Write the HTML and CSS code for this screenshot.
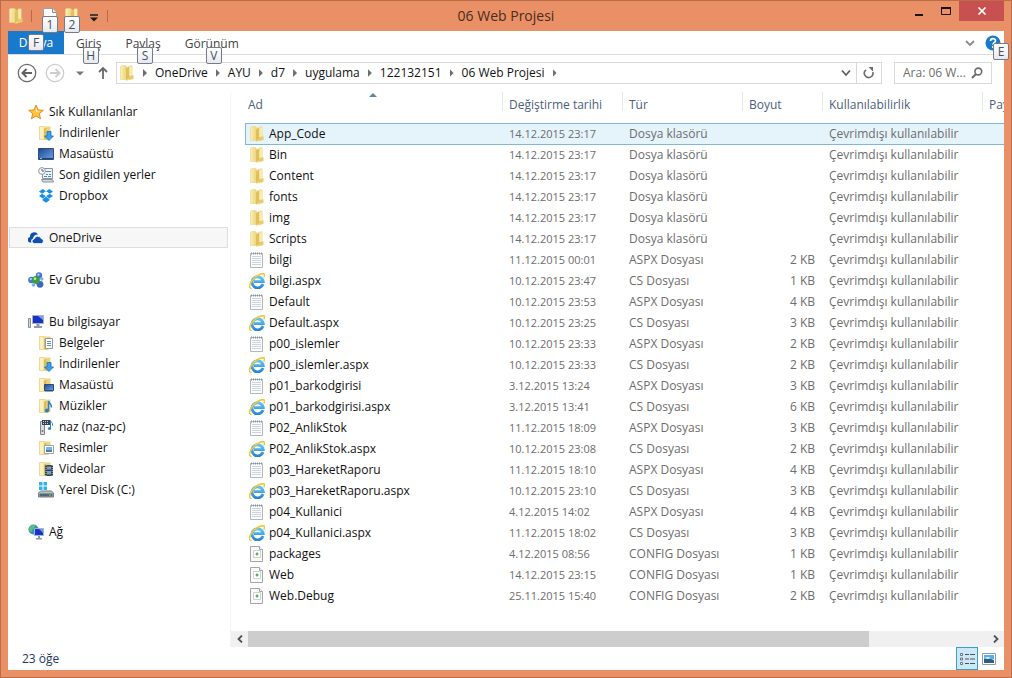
FILE: index.html
```html
<!DOCTYPE html>
<html lang="tr">
<head>
<meta charset="utf-8">
<title>06 Web Projesi</title>
<link rel="stylesheet" href="styles.css">
</head>
<body>
<svg class="sprite" aria-hidden="true">
  <defs>
    <linearGradient id="gold" x1="0" x2="1"><stop offset="0" stop-color="#fbf0b8"/><stop offset="1" stop-color="#eed37a"/></linearGradient>
    <linearGradient id="ieBlue" x1="0" y1="0" x2="0" y2="1"><stop offset="0" stop-color="#62c6f2"/><stop offset="1" stop-color="#2a86d4"/></linearGradient>
    <linearGradient id="screen" x1="0" y1="0" x2="1" y2="1"><stop offset="0" stop-color="#1c4690"/><stop offset="1" stop-color="#6fa3e4"/></linearGradient>
  </defs>
  <symbol id="folder" viewBox="0 0 16 16">
    <path d="M1.500 1.500l1-1h4l1 1v13h-6z" fill="url(#gold)" stroke="#ead488" stroke-width=".6"/>
    <path d="M7 3l4-2.500h2.500v12.500L9 15.500H7z" fill="#f0dc8c"/>
    <path d="M7 3.500l3-2v11.500l-3 2.300z" fill="#dfc05a"/>
    <path d="M10.500 1.500h2.500v11h-2.500z" fill="#f8ebb0"/>
    <path d="M10 11l4.500-.8v3.800L10 15z" fill="#e8cc6a"/>
  </symbol>
  <symbol id="folder-open" viewBox="0 0 16 16">
    <path d="M1.500 1.500h6l1 1v12h-7z" fill="#f6e6a2" stroke="#e2c873" stroke-width=".6"/>
    <path d="M8.500 1.500h4v12l-4 2z" fill="#ecd47c"/>
    <path d="M2 2h3v12H2z" fill="#fbf0bf"/>
    <path d="M6 3.500l2.500-1V15L6 14z" fill="#dcbd58"/>
  </symbol>
  <symbol id="text" viewBox="0 0 16 16">
    <path d="M1.500 1.500h12v14h-12z" fill="#fbfcfd" stroke="#b4b7bc"/>
    <path d="M3 4.500h9M3 6.500h9M3 8.500h9M3 10.500h9M3 12.500h9" stroke="#cdd4dc"/>
    <path d="M2 1.500h11" stroke="#8a9098" stroke-width="2" stroke-dasharray="1 1"/>
  </symbol>
  <symbol id="ie" viewBox="0 0 16 16">
    <path d="M14 11A5.600 5.600 0 1 1 14.200 8.600H5" fill="none" stroke="url(#ieBlue)" stroke-width="2.900"/>
    <path d="M2.600 15.200C-1 15.800.2 10.500 4.400 6 8.600 1.600 14.300-.5 15.300 1.300c.5 1-.1 2.200-.6 3" fill="none" stroke="#efc83a" stroke-width="1.600"/>
  </symbol>
  <symbol id="config" viewBox="0 0 16 16">
    <path d="M1.500 .5h9l3 3v12h-12z" fill="#fafafa" stroke="#a3a5a8"/>
    <path d="M10.500 .5v3h3" fill="#fff" stroke="#a3a5a8"/>
    <path d="M4.500 4.500h7v7h-7z" fill="#fff" stroke="#ccd3cc"/>
    <path d="M6.500 8h3M8 6.500v3" stroke="#2ea043" stroke-width="1.200"/>
  </symbol>
  <symbol id="star" viewBox="0 0 16 16">
    <path d="M8 1l2 4.900 5.300.4-4.100 3.400 1.400 5.100L8 12l-4.600 2.800 1.400-5.100L.7 6.300 6 5.900z" fill="#fdc73a" stroke="#e48a25"/>
    <path d="M8 3l1.300 3.700 3.500.3-5 1.200z" fill="#ffeaa0"/>
  </symbol>
  <symbol id="downloads" viewBox="0 0 16 16">
    <use href="#folder-open"/>
    <path d="M9 6.500h4V11h2.500L11 15.500 6.500 11H9z" fill="#38a2ec" stroke="#186db5" stroke-width=".8"/>
  </symbol>
  <symbol id="desktop" viewBox="0 0 16 16">
    <path d="M.5 2.500h15v11H.5z" fill="url(#screen)" stroke="#2b4d86"/>
    <path d="M1 12.500h14" stroke="#243f6d"/><path d="M2 12.500h2" stroke="#8ed35c"/>
  </symbol>
  <symbol id="recent" viewBox="0 0 16 16">
    <path d="M4.500 1.500h10v10h-10z" fill="#eef3f7" stroke="#8a949e"/>
    <path d="M3.500 12.500h11l1 2.500H5z" fill="#d3d8dd" stroke="#8a949e"/>
    <path d="M8 4.500h5M8 7.500h2M11 7.500h2M6 9.500h3M10 9.500h3" stroke="#4f88bd"/>
    <circle cx="4" cy="4" r="3.400" fill="#f4f6f8" stroke="#8e979f"/>
    <path d="M4 2v2h2" fill="none" stroke="#58636e"/>
  </symbol>
  <symbol id="dropbox" viewBox="0 0 16 16">
    <path d="M4.800 1L8 3.400 4.300 5.700 1 3.400zM11.200 1L15 3.400l-3.300 2.300L8 3.400zM1 8l3.300-2.300L8 8l-3.200 2.500zM15 8l-3.300-2.300L8 8l3.200 2.500zM4.500 11.300L8 8.700l3.500 2.600v1L8 14.800l-3.500-2.500z" fill="#168fe8"/>
    <path d="M4.300 5.700L8 3.400l3.700 2.300L8 8z" fill="#fff"/>
  </symbol>
  <symbol id="onedrive" viewBox="0 0 16 16">
    <path d="M1.800 12.500A2.800 2.800 0 0 1 2 7a4.300 4.300 0 0 1 8-2.500A5 5 0 0 0 5 8.500a3 3 0 0 0-1.500 4z" fill="#0f4eb5"/>
    <path d="M6.500 13.500a2.300 2.300 0 0 1-.3-4.600 3.700 3.700 0 0 1 6.900-.4 2.600 2.600 0 0 1 .6 5z" fill="#0f4eb5" stroke="#fff" stroke-width=".7"/>
  </symbol>
  <symbol id="homegroup" viewBox="0 0 16 16">
    <circle cx="11" cy="3.500" r="3.200" fill="#4775d1"/><circle cx="3.500" cy="8" r="3.300" fill="#4577d3"/><circle cx="12" cy="12.300" r="3.400" fill="#3e65bf"/>
    <circle cx="8" cy="8" r="3.900" fill="#3f9c42"/><circle cx="5.500" cy="13" r="1.800" fill="#6fb6e6"/><circle cx="13.800" cy="7" r="1.700" fill="#70b5e6"/>
    <circle cx="10.400" cy="2.700" r="1.100" fill="#c8dcff"/><circle cx="2.800" cy="7" r="1.100" fill="#c8dcff"/><circle cx="7" cy="6.700" r="1.300" fill="#b9efb2"/>
  </symbol>
  <symbol id="computer" viewBox="0 0 16 16">
    <path d="M4.500 1.500h11v8h-11z" fill="#1632c8" stroke="#a9b3bf"/>
    <path d="M10 2h5v4z" fill="#7f9cf2"/>
    <path d="M8.500 10h3v2h-3zM6 12h8v2H6z" fill="#8f9aa8"/>
    <path d="M.5 4.500h2v9h-2z" fill="#d6dade" stroke="#858e97"/>
  </symbol>
  <symbol id="documents" viewBox="0 0 16 16">
    <use href="#folder-open"/>
    <path d="M7.500 3.500h7v10h-7z" fill="#fff" stroke="#8f9dab"/><path d="M9 6.500h4M9 8.500h4M9 10.500h4" stroke="#6690c1"/>
  </symbol>
  <symbol id="desktop-folder" viewBox="0 0 16 16">
    <use href="#folder-open"/>
    <path d="M6.500 7.500h9v6h-9z" fill="url(#screen)" stroke="#2c4b7d"/><path d="M7 14.500h8" stroke="#9aa5b3"/>
  </symbol>
  <symbol id="music" viewBox="0 0 16 16">
    <use href="#folder-open"/>
    <path d="M10.500 12.500V3c.5 2.500 3.500 3 3 6.500" fill="none" stroke="#2b7fd0" stroke-width="1.500"/><circle cx="9" cy="12.500" r="2.100" fill="#2b7fd0"/>
  </symbol>
  <symbol id="media" viewBox="0 0 16 16">
    <path d="M2.500 2.500h4v13h-4z" fill="#d9dde1" stroke="#7e878f"/>
    <path d="M4 1h8v5H4z" fill="#39424c"/><path d="M5 2.500h6M5 4.500h6" stroke="#cbd5df" stroke-dasharray="1 1"/>
    <path d="M12.500 9.500V1.500c.5 2 2.500 2 2 5" fill="none" stroke="#2a84cc"/><circle cx="11.500" cy="9.500" r="1.600" fill="#2a84cc"/>
    <circle cx="4.500" cy="12" r="1" fill="#6b747c"/>
  </symbol>
  <symbol id="pictures" viewBox="0 0 16 16">
    <use href="#folder-open"/>
    <path d="M6.500 5.500h9v8h-9z" fill="#fff" stroke="#9aa4ae"/><path d="M8 7h6v3H8z" fill="#75b6e6"/><path d="M8 10h6v2H8z" fill="#597f8c"/>
  </symbol>
  <symbol id="videos" viewBox="0 0 16 16">
    <use href="#folder-open"/>
    <path d="M7 4h8v11H7z" fill="#38414d"/><path d="M9 5.500h4v3H9zM9 10h4v3.500H9z" fill="#6fa0cd"/><path d="M8 4v11M14.200 4v11" stroke="#e6eaee" stroke-width=".8" stroke-dasharray="1 1"/>
  </symbol>
  <symbol id="disk" viewBox="0 0 16 16">
    <path d="M1 0h3.500v3.500H1zM5.500 0H9v3.500H5.500zM1 4.500h3.500V8H1zM5.500 4.500H9V8H5.500z" fill="#2bb4ee"/>
    <path d="M2.500 9h11L15.500 11v4H.5v-4z" fill="#b6bec6" stroke="#76818b"/><path d="M1.500 11.500h13v3h-13z" fill="#4f6874"/><path d="M11 13h2" stroke="#6ee25a"/>
  </symbol>
  <symbol id="network" viewBox="0 0 16 16">
    <circle cx="5.500" cy="5.500" r="5" fill="#2e91d0"/><path d="M2 3c2-2.500 4-2 6-1.500L5 5 3 8.500C1 7 .6 5 2 3z" fill="#65bf69"/>
    <path d="M6.500 4.500h9v7h-9z" fill="#1735cc" stroke="#aab5c2"/><path d="M11 5h4v4z" fill="#7692ef"/><path d="M10 12h2v2h-2zM8 14h6v1.500H8z" fill="#8d98a6"/>
  </symbol>
</svg>

<div class="window">
  <header class="titlebar">
    <div class="quick">
      <svg class="icon16"><use href="#folder"/></svg>
      <span class="rule"></span>
      <div class="quick-set">
        <button class="quick-btn" aria-label="Özellikler">
          <svg class="icon16" viewBox="0 0 16 16"><path d="M1.500 .5h9l4 4v11h-13z" fill="#fdfdfd" stroke="#a2a2a2"/><path d="M10.500 .5v4h4" fill="#eee" stroke="#8c8c8c"/></svg>
          <kbd class="keytip tip-quick">1</kbd>
        </button>
        <button class="quick-btn" aria-label="Yeni klasör">
          <svg class="icon16"><use href="#folder"/></svg>
          <kbd class="keytip tip-quick">2</kbd>
        </button>
      </div>
      <button class="quick-more" aria-label="Araç çubuğunu özelleştir">
        <svg width="8" height="8" viewBox="0 0 8 8"><path d="M0 1h8" stroke="#1a1a1a" stroke-width="1.500"/><path d="M0 3.500h8L4 7.500z" fill="#1a1a1a"/></svg>
      </button>
      <span class="rule"></span>
    </div>
    <h1 class="title">06 Web Projesi</h1>
    <div class="controls">
      <button aria-label="Simge durumuna küçült"><svg width="12" height="12" viewBox="0 0 12 12"><path d="M2 10h8" stroke="#1b1410" stroke-width="2"/></svg></button>
      <button aria-label="Ekranı kapla"><svg width="12" height="12" viewBox="0 0 12 12"><path d="M1.500 3h9v6.500h-9z" fill="none" stroke="#1b1410"/><path d="M1 3h10" stroke="#1b1410" stroke-width="2"/></svg></button>
      <button class="close" aria-label="Kapat"><svg width="10" height="10" viewBox="0 0 10 10"><path d="M1.500 1.500l7 7M8.500 1.500l-7 7" stroke="#fff" stroke-width="1.700"/></svg></button>
    </div>
  </header>

  <div class="client">
    <nav class="ribbon" aria-label="Şerit">
      <button class="tab file">Dosya<kbd class="keytip tip-file">F</kbd></button>
      <button class="tab">Giriş<kbd class="keytip tip-tab">H</kbd></button>
      <button class="tab">Paylaş<kbd class="keytip tip-tab">S</kbd></button>
      <button class="tab">Görünüm<kbd class="keytip tip-tab">V</kbd></button>
      <div class="ribbon-end">
        <button class="plain" aria-label="Şeridi genişlet"><svg width="10" height="8" viewBox="0 0 10 8"><path d="M1 2l4 4 4-4" fill="none" stroke="#8b8b8b" stroke-width="1.800"/></svg></button>
        <button class="plain help" aria-label="Yardım">
          <svg width="16" height="16" viewBox="0 0 16 16"><circle cx="8" cy="8" r="7.500" fill="#1979ca"/><path d="M5.500 6C5.500 2.800 10.500 2.900 10.500 5.800 10.500 7.700 8 7.700 8 9.800M8 11v2" fill="none" stroke="#fff" stroke-width="1.700"/></svg>
          <kbd class="keytip tip-help">E</kbd>
        </button>
      </div>
    </nav>

    <div class="navbar">
      <div class="history">
        <button class="plain" aria-label="Geri"><svg width="20" height="20" viewBox="0 0 20 20"><circle cx="10" cy="10" r="8.700" fill="none" stroke="#6b6b6b" stroke-width="1.300"/><path d="M15 10H6M9.500 6l-4 4 4 4" fill="none" stroke="#626262" stroke-width="2"/></svg></button>
        <button class="plain" aria-label="İleri"><svg width="20" height="20" viewBox="0 0 20 20"><circle cx="10" cy="10" r="8.700" fill="none" stroke="#cdcdcd" stroke-width="1.300"/><path d="M5 10h9M10.500 6l4 4-4 4" fill="none" stroke="#cdcdcd" stroke-width="2"/></svg></button>
        <button class="plain" aria-label="Son konumlar"><svg width="8" height="5" viewBox="0 0 8 5"><path d="M0 .5h8L4 4.500z" fill="#7a7a7a"/></svg></button>
        <button class="plain" aria-label="Yukarı"><svg width="10" height="14" viewBox="0 0 10 14"><path d="M5 13V2M1 6l4-4 4 4" fill="none" stroke="#686868" stroke-width="1.800"/></svg></button>
      </div>
      <div class="address">
        <svg class="icon16"><use href="#folder"/></svg>
        <ol class="crumbs">
          <li><a href="#">OneDrive</a></li>
          <li><a href="#">AYU</a></li>
          <li><a href="#">d7</a></li>
          <li><a href="#">uygulama</a></li>
          <li><a href="#">122132151</a></li>
          <li><a href="#">06 Web Projesi</a></li>
          <li></li>
        </ol>
        <button class="plain address-drop" aria-label="Önceki konumlar"><svg width="10" height="8" viewBox="0 0 10 8"><path d="M1 1.500l4 4.500 4-4.500" fill="none" stroke="#5f5f5f" stroke-width="1.800"/></svg></button>
        <button class="plain refresh" aria-label="Yenile"><svg width="12" height="12" viewBox="0 0 12 12"><path d="M3 2.800A4.300 4.300 0 1 0 9.800 5" fill="none" stroke="#6d6d6d" stroke-width="1.600"/><path d="M5.500 0H10v4.500z" fill="#6d6d6d"/></svg></button>
      </div>
      <label class="search">
        <input type="text" placeholder="Ara: 06 W..." aria-label="Ara">
        <svg width="12" height="12" viewBox="0 0 12 12"><circle cx="7.300" cy="4.500" r="3.400" fill="none" stroke="#6b6b6b" stroke-width="1.600"/><path d="M5 7L1 11" stroke="#6b6b6b" stroke-width="2"/></svg>
      </label>
    </div>

    <div class="body">
      <aside class="tree">
        <ul class="group">
          <li><a href="#"><svg class="icon16"><use href="#star"/></svg>Sık Kullanılanlar</a></li>
          <li class="child"><a href="#"><svg class="icon16"><use href="#downloads"/></svg>İndirilenler</a></li>
          <li class="child"><a href="#"><svg class="icon16"><use href="#desktop"/></svg>Masaüstü</a></li>
          <li class="child"><a href="#"><svg class="icon16"><use href="#recent"/></svg>Son gidilen yerler</a></li>
          <li class="child"><a href="#"><svg class="icon16"><use href="#dropbox"/></svg>Dropbox</a></li>
        </ul>
        <ul class="group">
          <li class="current"><a href="#"><svg class="icon16"><use href="#onedrive"/></svg>OneDrive</a></li>
        </ul>
        <ul class="group">
          <li><a href="#"><svg class="icon16"><use href="#homegroup"/></svg>Ev Grubu</a></li>
        </ul>
        <ul class="group">
          <li><a href="#"><svg class="icon16"><use href="#computer"/></svg>Bu bilgisayar</a></li>
          <li class="child"><a href="#"><svg class="icon16"><use href="#documents"/></svg>Belgeler</a></li>
          <li class="child"><a href="#"><svg class="icon16"><use href="#downloads"/></svg>İndirilenler</a></li>
          <li class="child"><a href="#"><svg class="icon16"><use href="#desktop-folder"/></svg>Masaüstü</a></li>
          <li class="child"><a href="#"><svg class="icon16"><use href="#music"/></svg>Müzikler</a></li>
          <li class="child"><a href="#"><svg class="icon16"><use href="#media"/></svg>naz (naz-pc)</a></li>
          <li class="child"><a href="#"><svg class="icon16"><use href="#pictures"/></svg>Resimler</a></li>
          <li class="child"><a href="#"><svg class="icon16"><use href="#videos"/></svg>Videolar</a></li>
          <li class="child"><a href="#"><svg class="icon16"><use href="#disk"/></svg>Yerel Disk (C:)</a></li>
        </ul>
        <ul class="group">
          <li><a href="#"><svg class="icon16"><use href="#network"/></svg>Ağ</a></li>
        </ul>
      </aside>

      <main class="pane">
        <div class="list">
          <table class="files">
            <colgroup><col class="c-name"><col class="c-date"><col class="c-type"><col class="c-size"><col class="c-avail"><col></colgroup>
            <thead>
              <tr>
                <th scope="col" aria-sort="ascending"><div class="head first">Ad<svg class="sort" width="8" height="4" viewBox="0 0 8 4"><path d="M0 4l4-4 4 4z" fill="#5c86a8"/></svg></div></th>
                <th scope="col"><div class="head">Değiştirme tarihi</div></th>
                <th scope="col"><div class="head">Tür</div></th>
                <th scope="col"><div class="head">Boyut</div></th>
                <th scope="col"><div class="head">Kullanılabilirlik</div></th>
                <th scope="col"><div class="head">Paylaşım</div></th>
              </tr>
            </thead>
            <tbody>
              <tr class="selected"><td><span class="name"><svg class="icon16"><use href="#folder"/></svg>App_Code</span></td><td>14.12.2015 23:17</td><td>Dosya klasörü</td><td></td><td>Çevrimdışı kullanılabilir</td><td></td></tr>
              <tr><td><span class="name"><svg class="icon16"><use href="#folder"/></svg>Bin</span></td><td>14.12.2015 23:17</td><td>Dosya klasörü</td><td></td><td>Çevrimdışı kullanılabilir</td><td></td></tr>
              <tr><td><span class="name"><svg class="icon16"><use href="#folder"/></svg>Content</span></td><td>14.12.2015 23:17</td><td>Dosya klasörü</td><td></td><td>Çevrimdışı kullanılabilir</td><td></td></tr>
              <tr><td><span class="name"><svg class="icon16"><use href="#folder"/></svg>fonts</span></td><td>14.12.2015 23:17</td><td>Dosya klasörü</td><td></td><td>Çevrimdışı kullanılabilir</td><td></td></tr>
              <tr><td><span class="name"><svg class="icon16"><use href="#folder"/></svg>img</span></td><td>14.12.2015 23:17</td><td>Dosya klasörü</td><td></td><td>Çevrimdışı kullanılabilir</td><td></td></tr>
              <tr><td><span class="name"><svg class="icon16"><use href="#folder"/></svg>Scripts</span></td><td>14.12.2015 23:17</td><td>Dosya klasörü</td><td></td><td>Çevrimdışı kullanılabilir</td><td></td></tr>
              <tr><td><span class="name"><svg class="icon16"><use href="#text"/></svg>bilgi</span></td><td>11.12.2015 00:01</td><td>ASPX Dosyası</td><td>2 KB</td><td>Çevrimdışı kullanılabilir</td><td></td></tr>
              <tr><td><span class="name"><svg class="icon16"><use href="#ie"/></svg>bilgi.aspx</span></td><td>10.12.2015 23:47</td><td>CS Dosyası</td><td>1 KB</td><td>Çevrimdışı kullanılabilir</td><td></td></tr>
              <tr><td><span class="name"><svg class="icon16"><use href="#text"/></svg>Default</span></td><td>10.12.2015 23:53</td><td>ASPX Dosyası</td><td>4 KB</td><td>Çevrimdışı kullanılabilir</td><td></td></tr>
              <tr><td><span class="name"><svg class="icon16"><use href="#ie"/></svg>Default.aspx</span></td><td>10.12.2015 23:25</td><td>CS Dosyası</td><td>3 KB</td><td>Çevrimdışı kullanılabilir</td><td></td></tr>
              <tr><td><span class="name"><svg class="icon16"><use href="#text"/></svg>p00_islemler</span></td><td>10.12.2015 23:33</td><td>ASPX Dosyası</td><td>2 KB</td><td>Çevrimdışı kullanılabilir</td><td></td></tr>
              <tr><td><span class="name"><svg class="icon16"><use href="#ie"/></svg>p00_islemler.aspx</span></td><td>10.12.2015 23:33</td><td>CS Dosyası</td><td>2 KB</td><td>Çevrimdışı kullanılabilir</td><td></td></tr>
              <tr><td><span class="name"><svg class="icon16"><use href="#text"/></svg>p01_barkodgirisi</span></td><td>3.12.2015 13:24</td><td>ASPX Dosyası</td><td>3 KB</td><td>Çevrimdışı kullanılabilir</td><td></td></tr>
              <tr><td><span class="name"><svg class="icon16"><use href="#ie"/></svg>p01_barkodgirisi.aspx</span></td><td>3.12.2015 13:41</td><td>CS Dosyası</td><td>6 KB</td><td>Çevrimdışı kullanılabilir</td><td></td></tr>
              <tr><td><span class="name"><svg class="icon16"><use href="#text"/></svg>P02_AnlikStok</span></td><td>11.12.2015 18:09</td><td>ASPX Dosyası</td><td>3 KB</td><td>Çevrimdışı kullanılabilir</td><td></td></tr>
              <tr><td><span class="name"><svg class="icon16"><use href="#ie"/></svg>P02_AnlikStok.aspx</span></td><td>10.12.2015 23:08</td><td>CS Dosyası</td><td>2 KB</td><td>Çevrimdışı kullanılabilir</td><td></td></tr>
              <tr><td><span class="name"><svg class="icon16"><use href="#text"/></svg>p03_HareketRaporu</span></td><td>11.12.2015 18:10</td><td>ASPX Dosyası</td><td>4 KB</td><td>Çevrimdışı kullanılabilir</td><td></td></tr>
              <tr><td><span class="name"><svg class="icon16"><use href="#ie"/></svg>p03_HareketRaporu.aspx</span></td><td>10.12.2015 23:10</td><td>CS Dosyası</td><td>3 KB</td><td>Çevrimdışı kullanılabilir</td><td></td></tr>
              <tr><td><span class="name"><svg class="icon16"><use href="#text"/></svg>p04_Kullanici</span></td><td>4.12.2015 14:02</td><td>ASPX Dosyası</td><td>4 KB</td><td>Çevrimdışı kullanılabilir</td><td></td></tr>
              <tr><td><span class="name"><svg class="icon16"><use href="#ie"/></svg>p04_Kullanici.aspx</span></td><td>11.12.2015 18:02</td><td>CS Dosyası</td><td>3 KB</td><td>Çevrimdışı kullanılabilir</td><td></td></tr>
              <tr><td><span class="name"><svg class="icon16"><use href="#config"/></svg>packages</span></td><td>4.12.2015 08:56</td><td>CONFIG Dosyası</td><td>1 KB</td><td>Çevrimdışı kullanılabilir</td><td></td></tr>
              <tr><td><span class="name"><svg class="icon16"><use href="#config"/></svg>Web</span></td><td>14.12.2015 23:15</td><td>CONFIG Dosyası</td><td>1 KB</td><td>Çevrimdışı kullanılabilir</td><td></td></tr>
              <tr><td><span class="name"><svg class="icon16"><use href="#config"/></svg>Web.Debug</span></td><td>25.11.2015 15:40</td><td>CONFIG Dosyası</td><td>2 KB</td><td>Çevrimdışı kullanılabilir</td><td></td></tr>
            </tbody>
          </table>
        </div>
        <div class="scrollbar">
          <button class="plain" aria-label="Sola kaydır"><svg width="8" height="8" viewBox="0 0 8 8"><path d="M6 .5L2.500 4 6 7.500" fill="none" stroke="#505050" stroke-width="1.800"/></svg></button>
          <div class="track"><div class="thumb"></div></div>
          <button class="plain" aria-label="Sağa kaydır"><svg width="8" height="8" viewBox="0 0 8 8"><path d="M2 .5L5.500 4 2 7.500" fill="none" stroke="#505050" stroke-width="1.800"/></svg></button>
        </div>
      </main>
    </div>

    <footer class="status">
      <span>23 öğe</span>
      <div class="views">
        <button class="view on" aria-label="Ayrıntılar"><svg width="16" height="14" viewBox="0 0 16 14"><path d="M1.500 1.500h2v2h-2zM1.500 6h2v2h-2zM1.500 10.500h2v2h-2z" fill="#fff" stroke="#6a757f"/><path d="M6 2.500h4M11 2.500h5M6 7h4M11 7h5M6 11.500h4M11 11.500h5" stroke="#4a545e"/></svg></button>
        <button class="view" aria-label="Büyük simgeler"><svg width="14" height="12" viewBox="0 0 14 12"><path d="M.5 .5h13v11H.5z" fill="#fff" stroke="#8c9cac"/><path d="M2 2h10v4H2z" fill="#5aaee8"/><path d="M2 6l4-1 6 2v3H2z" fill="#2d5f80"/><path d="M2 5l4-1 3 1-3 1z" fill="#e8f5ff"/></svg></button>
      </div>
    </footer>
  </div>
</div>
</body>
</html>
```
FILE: styles.css
```css
* { box-sizing: border-box; }

body {
  margin: 0;
  color: #111;
  font: 12px/16px "Open Sans", "Noto Sans", sans-serif;
}

button {
  padding: 0;
  border: 0;
  background: none;
  color: inherit;
  font: inherit;
}

a { color: inherit; text-decoration: none; }

ul, ol { margin: 0; padding: 0; list-style: none; }

svg { display: block; flex: none; }

.sprite { position: absolute; width: 0; height: 0; }

.icon16 { width: 16px; height: 16px; }

.window {
  display: flex;
  flex-direction: column;
  min-height: 100vh;
  padding: 0 7px 7px;
  border: 1px solid #bd6c48;
  background: #e99066;
}

/* Title bar */
.titlebar {
  display: grid;
  grid-template-columns: 1fr auto 1fr;
  height: 30px;
}

.quick { display: flex; align-items: center; gap: 7px; }

.quick-set { display: flex; }

.rule { width: 1px; height: 12px; background: #b9694a; }

.quick-btn { position: relative; padding: 0 3px; }

.quick-more { margin: 4px 2px 0 0; }

.title {
  margin: 0;
  color: #4b2c1e;
  font-size: 14px;
  font-weight: 400;
  line-height: 30px;
}

.controls { display: flex; justify-content: flex-end; align-items: flex-start; }

.controls button {
  display: grid;
  place-items: center;
  width: 27px;
  height: 20px;
}

.controls .close { width: 45px; background: #c75050; }

/* Key tips */
.keytip {
  position: absolute;
  z-index: 2;
  width: 16px;
  height: 17px;
  border: 1px solid #767b85;
  border-radius: 2px;
  background: linear-gradient(#fff, #e6e9f0);
  color: #4b4f58;
  font: 12px/15px "Open Sans", "Noto Sans", sans-serif;
  text-align: center;
}

.tip-quick { top: 8px; left: 3px; }
.tip-file { top: 3px; left: 20px; }
.tip-tab { top: 16px; left: calc(50% - 6px); }
.tip-help { top: 8px; left: 8px; }

/* Client area */
.client {
  display: flex;
  flex: 1;
  flex-direction: column;
  min-width: 0;
  background: #fff;
}

.ribbon {
  display: flex;
  height: 24px;
  border-bottom: 1px solid #dadbdc;
}

.tab {
  position: relative;
  padding: 2px 12px 0;
  color: #444;
}

.tab.file {
  width: 56px;
  padding: 0;
  background: #1979ca;
  color: #fff;
}

.ribbon-end {
  display: flex;
  align-items: center;
  gap: 10px;
  margin-left: auto;
  padding-right: 3px;
}

.help { position: relative; }

.navbar {
  display: flex;
  align-items: center;
  gap: 12px;
  padding: 7px 12px 8px 9px;
}

.history { display: flex; align-items: center; gap: 8px; }

.history .plain:nth-child(3) { margin: 0 6px 0 3px; }

.history .plain:nth-child(4) { margin-right: -4px; }

.address {
  display: flex;
  flex: 1;
  align-items: stretch;
  height: 22px;
  padding-left: 2px;
  border: 1px solid #d9d9d9;
}

.address .icon16 { align-self: center; }

.crumbs { display: flex; flex: 1; align-items: center; }

.crumbs li { display: flex; align-items: center; }

.crumbs li::before {
  width: 4px;
  height: 8px;
  margin: 0 8px;
  background: #6d6d6d;
  clip-path: polygon(0 0, 100% 50%, 0 100%);
  content: "";
}

.address-drop { width: 20px; }

.address-drop svg, .refresh svg { margin: 0 auto; }

.refresh { width: 25px; border-left: 1px solid #d9d9d9; }

.search {
  display: flex;
  align-items: center;
  width: 98px;
  height: 22px;
  padding: 0 8px;
  border: 1px solid #d9d9d9;
}

.search input {
  flex: 1;
  min-width: 0;
  padding: 0;
  border: 0;
  outline: 0;
  background: none;
  font: inherit;
}

.search input::placeholder { color: #6d6d6d; opacity: 1; }

.body { display: flex; flex: 1; }

/* Folder tree */
.tree {
  width: 223px;
  padding: 9px 2px 0 1px;
  border-right: 1px solid #f5f5f5;
}

.group { margin-bottom: 21px; }

.tree a {
  display: flex;
  align-items: center;
  gap: 5px;
  height: 21px;
  padding-left: 19px;
}

.tree .child a { padding-left: 29px; }

.tree .current { background: #f7f7f7; box-shadow: inset 0 0 0 1px #dedede; }

/* File list */
.pane {
  display: flex;
  flex: 1;
  flex-direction: column;
  min-width: 0;
}

.list { flex: 1; overflow: hidden; padding-left: 14px; }

.files {
  width: 100%;
  border-spacing: 0;
  color: #6d6d6d;
  table-layout: fixed;
  white-space: nowrap;
}

.c-name { width: 257px; }
.c-date, .c-type { width: 120px; }
.c-size { width: 80px; }
.c-avail { width: 160px; }

.files th {
  padding: 0 0 12px;
  color: #4c607a;
  font-weight: 400;
  text-align: left;
}

.head {
  position: relative;
  height: 19px;
  padding-left: 6px;
  border-left: 1px solid #e3e8ee;
  line-height: 26px;
}

.head.first { padding-left: 3px; border-left: 0; }

.sort { position: absolute; top: 1px; left: calc(50% - 5px); }

.files td { height: 21px; padding: 0 7px; }

.files td:first-child { padding: 0 0 0 4px; color: #111; }

.files td:nth-child(2) { font-size: 11px; }

.files td:nth-child(4) { text-align: right; }

.name { display: flex; align-items: center; gap: 4px; }

.selected td {
  background: #e5f3fb;
  box-shadow: inset 0 1px #7fb8da, 0 1px #7fb8da;
}

.selected td:first-child {
  box-shadow: inset 1px 1px #7fb8da, 0 1px #7fb8da;
}

.scrollbar { display: flex; height: 16px; background: #f0f0f0; }

.scrollbar .plain { width: 17px; }

.scrollbar svg { margin: 0 auto; }

.track { flex: 1; }

.thumb { width: 84%; height: 100%; background: #cdcdcd; }

/* Status bar */
.status {
  display: flex;
  align-items: center;
  justify-content: space-between;
  height: 23px;
  padding: 0 4px 0 14px;
  color: #1e395b;
}

.views { display: flex; }

.view {
  display: grid;
  place-items: center;
  width: 22px;
  height: 23px;
  border: 1px solid transparent;
}

.view.on { border-color: #3d9dc9; background: #cce8f6; }
```
